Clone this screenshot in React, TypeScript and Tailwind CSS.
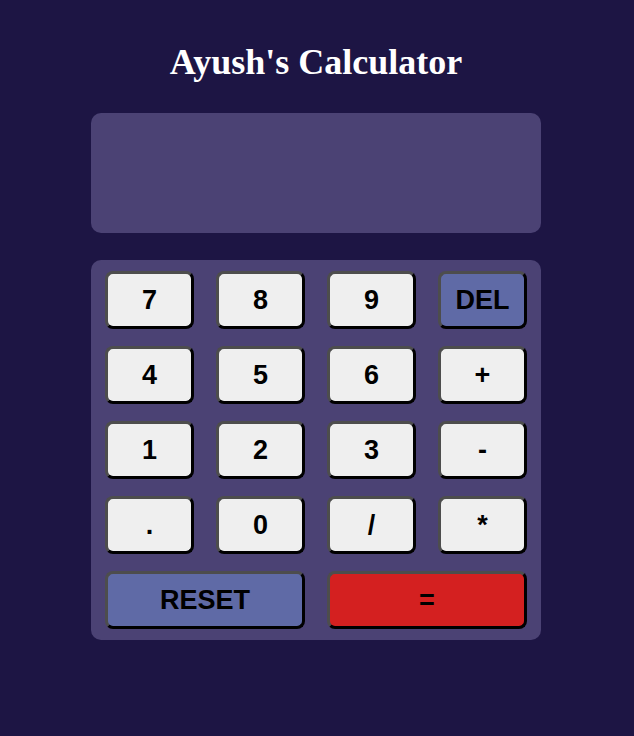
import React from "react";

const keys: { label: string; kind: "num" | "del" | "reset" | "eq"; span?: boolean }[] = [
  { label: "7", kind: "num" },
  { label: "8", kind: "num" },
  { label: "9", kind: "num" },
  { label: "DEL", kind: "del" },
  { label: "4", kind: "num" },
  { label: "5", kind: "num" },
  { label: "6", kind: "num" },
  { label: "+", kind: "num" },
  { label: "1", kind: "num" },
  { label: "2", kind: "num" },
  { label: "3", kind: "num" },
  { label: "-", kind: "num" },
  { label: ".", kind: "num" },
  { label: "0", kind: "num" },
  { label: "/", kind: "num" },
  { label: "*", kind: "num" },
  { label: "RESET", kind: "reset", span: true },
  { label: "=", kind: "eq", span: true },
];

export default function App() {
  return (
    <div className="min-h-[736px] w-full bg-[#1d1544] flex flex-col items-center pr-[2px]">
      <h1
        className="mt-[41px] text-[36px] leading-[42px] font-bold text-white"
        style={{ fontFamily: '"Liberation Serif", "Times New Roman", serif' }}
      >
        Ayush's Calculator
      </h1>
      <div className="mt-[30px] w-[450px] h-[120px] rounded-[10px] bg-[#4b4274]" />
      <div className="mt-[27px] w-[450px] rounded-[10px] bg-[#4b4274] pl-[14px] pr-[14px] py-[11px] grid grid-cols-4 gap-x-[22px] gap-y-[17px]">
        {keys.map((k) => {
          const bg =
            k.kind === "num"
              ? "bg-[#efefef]"
              : k.kind === "eq"
              ? "bg-[#d42020]"
              : "bg-[#5f6aa6]";
          return (
            <button
              key={k.label}
              className={`${bg} ${k.span ? "col-span-2" : ""} h-[58px] rounded-[8px] border-[3px] border-t-[#4d4d4d] border-l-[#4d4d4d] border-b-black border-r-black text-black font-bold text-[27px] flex items-center justify-center`}
              style={{ fontFamily: '"Liberation Sans", Arial, sans-serif' }}
            >
              {k.label}
            </button>
          );
        })}
      </div>
    </div>
  );
}
